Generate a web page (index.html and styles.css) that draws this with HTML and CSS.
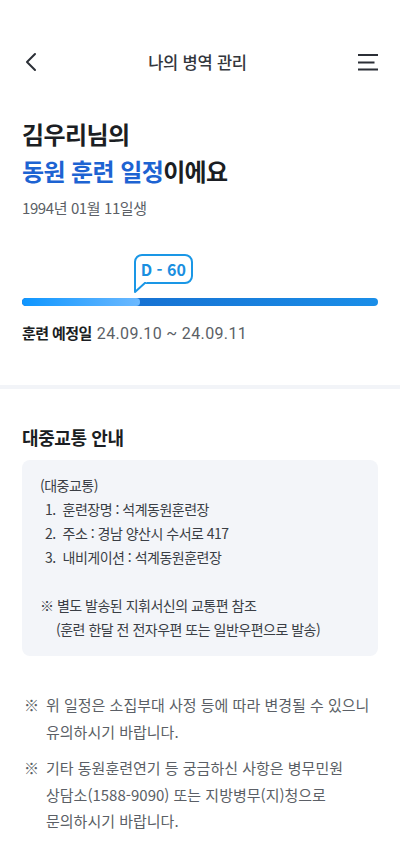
FILE: index.html
```html
<!DOCTYPE html>
<html lang="ko">
<head>
<meta charset="utf-8">
<link rel="stylesheet" href="styles.css">
</head>
<body>
<div class="page">
  <header class="topbar">
    <svg class="back" width="14" height="20" viewBox="0 0 14 20"><path d="M11 2 L3 10 L11 18" fill="none" stroke="#2b2f36" stroke-width="2" stroke-linecap="round" stroke-linejoin="round"/></svg>
    <h1 class="title">나의 병역 관리</h1>
    <svg class="menu" width="22" height="18" viewBox="0 0 22 18"><path d="M1 2 H21 M1 9.5 H17.5 M1 16.5 H21" fill="none" stroke="#2b2f36" stroke-width="2"/></svg>
  </header>

  <section class="hero">
    <h2 class="heading">김우리님의<br><span class="blue">동원 훈련 일정</span>이에요</h2>
    <p class="birth">1994년 01월 11일생</p>

    <div class="progress">
      <div class="bubble" style="margin-left: calc(33.1% - 6px)">
        D - 60
        <svg class="tail" width="14" height="12" viewBox="0 0 14 12"><path d="M0 0 H13 L2 10 Z" fill="#fff"/><path d="M1 0 V10 L12 0" fill="none" stroke="#1a97e6" stroke-width="2" stroke-linejoin="round"/></svg>
      </div>
      <div class="track"><div class="fill" style="width: 33.1%"></div></div>
    </div>
    <p class="dates"><b>훈련 예정일</b> <span class="num">24.09.10 ~ 24.09.11</span></p>
  </section>

  <div class="divider"></div>

  <section class="info">
    <h3 class="subhead">대중교통 안내</h3>
    <div class="box">
      <p>(대중교통)</p>
      <p class="item">1.&nbsp; 훈련장명 : 석계동원훈련장</p>
      <p class="item">2.&nbsp; 주소 : 경남 양산시 수서로 417</p>
      <p class="item">3.&nbsp; 내비게이션 : 석계동원훈련장</p>
      <p class="gap">※ 별도 발송된 지휘서신의 교통편 참조</p>
      <p class="indent">(훈련 한달 전 전자우편 또는 일반우편으로 발송)</p>
    </div>

    <ul class="notes">
      <li><span class="mark">※</span><span>위 일정은 소집부대 사정 등에 따라 변경될 수 있으니<br>유의하시기 바랍니다.</span></li>
      <li><span class="mark">※</span><span>기타 동원훈련연기 등 궁금하신 사항은 병무민원<br>상담소(1588-9090) 또는 지방병무(지)청으로<br>문의하시기 바랍니다.</span></li>
    </ul>
  </section>
</div>
</body>
</html>
```
FILE: styles.css
```css
* { box-sizing: border-box; }
html, body { margin: 0; padding: 0; background: #fff; }
body {
  font-family: "Noto Sans CJK KR", "Noto Sans", sans-serif;
  color: #1b1e23;
  width: 400px;
}
.page { width: 400px; }
p { margin: 0; }

.topbar {
  display: flex;
  align-items: center;
  justify-content: space-between;
  height: 48px;
  margin-top: 38px;
  padding: 0 21px 0 24px;
}
.title {
  margin: 0;
  font-size: 16.5px;
  font-weight: 500;
  color: #33373d;
  letter-spacing: -0.2px;
}
.back { display: block; }
.menu { display: block; }

.hero { padding: 29px 22px 0; }
.heading {
  margin: 0;
  font-size: 24px;
  line-height: 37px;
  font-weight: 700;
  color: #1b1e23;
  letter-spacing: -0.6px;
}
.blue { color: #1d63d2; }
.birth {
  margin-top: 8px;
  font-size: 15px;
  line-height: 22px;
  color: #5b5f66;
  letter-spacing: -0.4px;
}

.progress { margin-top: 35px; }
.bubble {
  position: relative;
  width: 59px;
  height: 30px;
  border: 2px solid #1a97e6;
  border-radius: 8px;
  border-bottom-left-radius: 0;
  display: flex;
  align-items: center;
  justify-content: center;
  font-size: 16px;
  font-weight: 700;
  color: #1a8fe0;
  letter-spacing: 0;
  background: #fff;
}
.tail {
  position: absolute;
  left: -2px;
  top: 26px;
}
.track {
  margin-top: 14px;
  height: 8px;
  border-radius: 4px;
  background: linear-gradient(90deg, #1565c9 0%, #1a8ee8 100%);
  overflow: hidden;
}
.fill {
  height: 100%;
  border-radius: 4px;
  background: linear-gradient(90deg, #0e96ff 0%, #6cb9ff 100%);
}
.dates {
  margin-top: 16px;
  font-size: 15px;
  line-height: 22px;
  color: #5b5f66;
}
.dates b { color: #1b1e23; font-weight: 700; letter-spacing: -0.6px; margin-right: 1px; }
.num { font-family: Roboto, "Noto Sans CJK KR", sans-serif; font-size: 16px; letter-spacing: 0.35px; }

.divider {
  margin-top: 40px;
  height: 4px;
  background: #f2f4f8;
}

.info { padding: 35px 22px 0; }
.subhead {
  margin: 0;
  font-size: 18px;
  line-height: 26px;
  font-weight: 700;
  color: #1b1e23;
  letter-spacing: -0.4px;
}
.box {
  margin-top: 10px;
  background: #f3f5f9;
  border-radius: 8px;
  padding: 13px 18px 15px;
  font-size: 14px;
  line-height: 24px;
  color: #3a3e45;
  letter-spacing: -0.5px;
}
.box .item { padding-left: 5px; }
.box .gap { margin-top: 24px; }
.box .indent { padding-left: 16px; }

.notes {
  list-style: none;
  margin: 36px 0 0;
  padding: 0 0 0 2px;
  font-size: 15px;
  line-height: 26.5px;
  color: #5b5f66;
  letter-spacing: 0;
}
.notes li { display: flex; gap: 9px; }
.notes li + li { margin-top: 10px; }
.mark { flex: none; width: 13px; }
```
